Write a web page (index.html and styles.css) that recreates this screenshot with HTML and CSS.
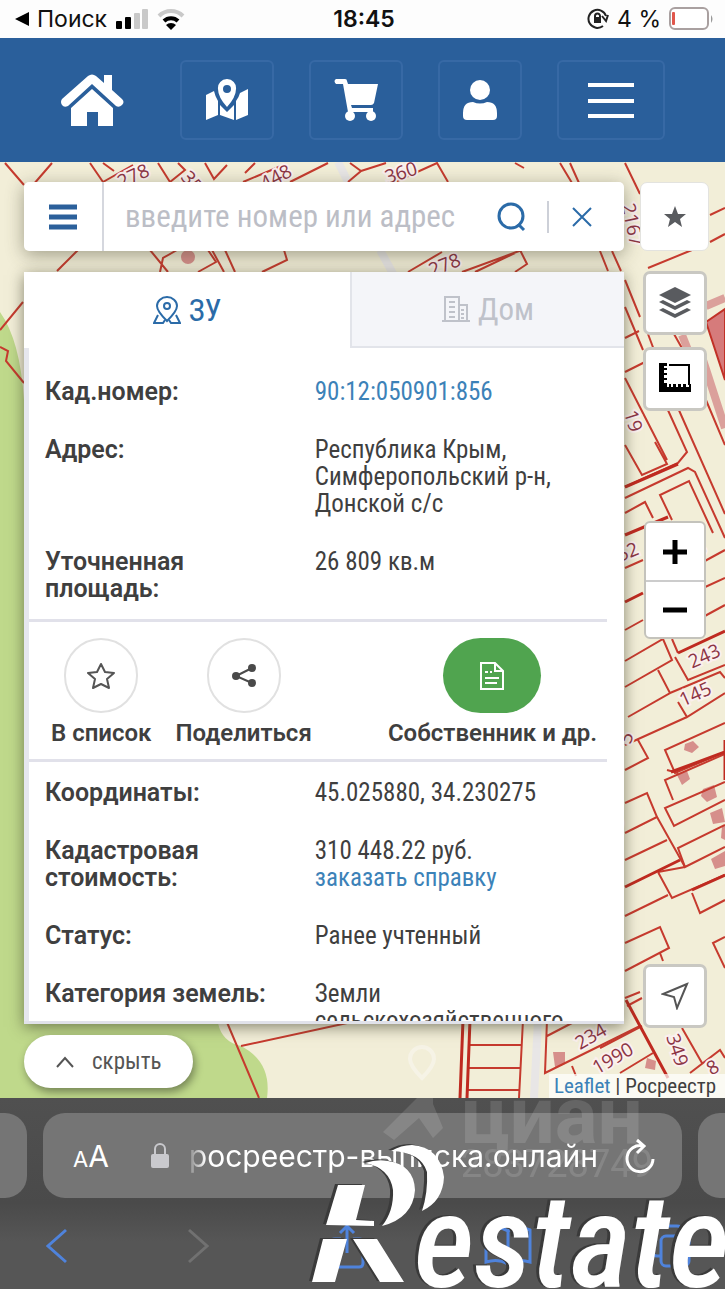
FILE: index.html
```html
<!DOCTYPE html>
<html lang="ru">
<head>
    <meta charset="UTF-8">
    <meta name="viewport" content="width=device-width, initial-scale=1.0">
    <title>Росреестр - выписка онлайн</title>
    <link rel="stylesheet" href="styles.css">
</head>
<body>
    <div class="status-bar">
        <div class="status-left">
            <svg width="14" height="14" viewBox="0 0 14 14"><path d="M0 7L14 0v14z"/></svg>
            <span>Поиск</span>
            <svg width="34" height="22" viewBox="0 0 34 22">
                <rect x="1" y="13" width="6" height="8" rx="1"/>
                <rect x="10" y="9" width="6" height="12" rx="1"/>
                <rect x="19" y="5" width="6" height="16" rx="1" fill="#c9c9c9"/>
                <rect x="27" y="1" width="6" height="20" rx="1" fill="#c9c9c9"/>
            </svg>
            <svg class="wifi" width="28" height="22" viewBox="0 0 28 22" fill="none" stroke-width="4">
                <path d="M2 8a17 17 0 0 1 24 0" stroke="#c9c9c9"/>
                <path d="M7 13a10 10 0 0 1 14 0" stroke="#000"/>
                <path d="M9 17a7 7 0 0 1 10 0l-5 5z" fill="#000"/>
            </svg>
        </div>
        <div class="status-time">18:45</div>
        <div class="status-right">
            <svg width="22" height="22" viewBox="0 0 22 22" fill="none" stroke="#222" stroke-width="2">
                <path d="M16 18a9 9 0 1 1 3-10M21 7l-2 6-4-5"/>
                <path d="M8 10V8a2.500 2.500 0 0 1 5 0v2"/>
                <rect x="7" y="9" width="7" height="6" fill="#222" stroke="none"/>
            </svg>
            <span>4 %</span>
            <svg width="44" height="24" viewBox="0 0 44 24">
                <rect x="1" y="1" width="38" height="21" rx="5" fill="#fff" stroke="#a9a0a0" stroke-width="2"/>
                <rect x="3" y="5" width="3" height="13" rx="1" fill="#e0574c"/>
                <path d="M42 8q3 4 0 8z" fill="#999"/>
            </svg>
        </div>
    </div>

    <nav class="navbar">
        <a class="home" href="#" aria-label="Главная">
            <svg width="64" height="52" viewBox="0 0 64 52" fill="#fff">
                <path d="M28 2q4-3 8 0l8 7V1h8v15l10 9q3 3 0 6t-6 1L32 10 8 32q-4 2-6-1t0-6z"/>
                <path d="M32 15l21 19v18H38V38H27v14H11V34z"/>
            </svg>
        </a>
        <a class="nav-box" href="#" aria-label="Карта">
            <svg width="46" height="42" viewBox="0 0 46 42" fill="#fff">
                <path d="M2 16l8-4q1 5 4 10v14L2 41zM16 26l7 7 7-7v15l-14-5zM32 22q3-4 4-8l8-4v26l-12 5z"/>
                <path fill-rule="evenodd" d="M23 0a9 9 0 0 1 9 10q0 8-9 18-9-10-9-18a9 9 0 0 1 9-10zm0 6a4 4 0 1 0 0 8 4 4 0 0 0 0-8z"/>
            </svg>
        </a>
        <a class="nav-box" href="#" aria-label="Корзина">
            <svg width="46" height="42" viewBox="0 0 46 42" fill="#fff">
                <path d="M3 0h9q2 0 2 2l1 3h30l-4 19q-1 2-3 2H18l1 3h21v4H15L10 5H3q-3-3 0-5z"/>
                <circle cx="17" cy="37" r="5"/><circle cx="38" cy="37" r="5"/>
            </svg>
        </a>
        <a class="nav-box nav-user" href="#" aria-label="Кабинет">
            <svg width="36" height="40" viewBox="0 0 36 40" fill="#fff">
                <circle cx="18" cy="10" r="10"/>
                <path d="M11 22q7 3 14 0 10 0 10 11v3q0 4-4 4H5q-4 0-4-4v-3q0-11 10-11z"/>
            </svg>
        </a>
        <button class="nav-box nav-menu" type="button" aria-label="Меню">
            <svg width="48" height="38" viewBox="0 0 48 38" stroke="#fff" stroke-width="4"><path d="M1 4h46M1 20h46M1 35h46"/></svg>
        </button>
    </nav>

    <main class="map">
        <svg class="map-layer" viewBox="0 162 725 936" preserveAspectRatio="xMidYMid slice" fill="none">
            <rect y="162" width="725" height="936" fill="#f2eed8"/>
            <!-- forest -->
            <path d="M0 312Q20 340 24 400L218 1023Q222 1042 241 1046Q272 1062 267 1098H0z" fill="#bfd98b"/>
            <!-- roads -->
            <path d="M338 162l18 36M380 250l22 40M538 1020l-4 78" stroke="#e8e6e6" stroke-width="8"/>
            <path d="M706 306l19-8M703 360l22 68M682 335l8 20" stroke="#dba09b" stroke-width="8"/>
            <!-- buildings -->
            <path d="M706 322l19-13v71z" fill="#d67b7b" stroke="#c13127" stroke-width="2"/>
            <g fill="#d68f8b">
                <circle cx="188" cy="257" r="7"/>
                <path d="M685 744l8-3 6 6-7 6-8-3zM677 775l10-4 3 8-8 6zM703 789l11-4 3 12-10 5-6-6zM710 813l12-5 3 14-12 2zM711 859l14-8v15l-10 3zM722 826h3v14l-4-2zM553 1052h12v12l-10 3zM647 1058l9 3-1 9-10-2z"/>
            </g>
            <!-- parcels -->
            <g stroke="#c63a2e" stroke-width="2">
                <path d="M5 163l19 22M52 163l-19 22M90 163l13 19 30-17M103 163l11 8M158 163l12 19 15-12-7-7M205 163l9 16 13-14M243 182l38-16M255 163l-10 10M290 182l38-19M350 163l11 8-13 11M361 171l25-8M395 182l42-19 11 19M515 163l9 5M560 163l12 20M570 163l9 20M625 163l15 31"/>
                <path d="M78 250l-21 21M150 250l18 22M160 272l3-14 14-8M198 272l18-10-8-12M212 250l12 22M225 250l10 22M262 272l25-12-3-10M408 272l34-20M462 272l60-22M520 250l7 14-12 8M475 272l40-19"/>
                <path d="M23 302L0 330M0 347l8 4-2 10 18 22"/>
                <path d="M710 215l15-7M710 242l15-8M648 268l44-18M600 251l8 20M612 251l9 20M625 280l15 37M625 307l18 43M625 338l14-7M648 334l6 16M674 334l9 16M703 393l22 52"/>
                <path d="M625 372l20-10M625 378l42 82M625 445l17 30 25-11-12-22M667 408l20 44-9 11-53 24M678 408l47 106M625 498l63-30 7 4 30 66M672 520l-12-25 29-14 24 52M625 513l20-11 8 16M625 568l18-8M625 630l18-10M703 562l22-12M703 588l22-10M703 617l22-12"/>
                <path d="M625 661l38-22 9 21-47 27M672 639l6 14M675 657l13 23 37-15M658 670l12 23-42 24M670 693l50-21 5 6M678 702l9 15 38-24M625 745l62-28M638 740l10 18-23 12M725 723l-60 27 10 23 50-21"/>
                <path d="M667 770l11 3M725 754l-60 26 8 20M725 782l-60 26 9 18 51-26M625 803l22-10 10 24-32 16M625 860l42-20M625 916l43-21M725 825l-47 23 7 19 40-20M685 867l-27 5M658 872l14 26 53-23M692 893l8 20 25-13M625 943l35-16 9 21-44 23M660 953l3 8M725 937l-12 6 12 25M625 998l15-6M627 1006l15-8"/>
                <path d="M657 817l28 50M600 1048l42-22M620 1073l33-20M682 1028l20 35M690 1073l30-23 5 8"/>
                <path d="M226 1020l33 78M241 1046l120-26M523 1020l-4 78M469 1045h53M468 1068h52M467 1090h52M547 1020l-2 53 95-47M547 1036l25-13M572 1066l4 10"/>
            </g>
            <g stroke="#bf2a20" stroke-width="3">
                <path d="M625 487l53-23M625 535l43-18M625 602l18-9M678 653l47-22M671 772l54-20M625 887l55-27M692 890l33-15M626 1000l42 78M463 1020l-3 78M470 1020l-3 78M725 740v40"/>
            </g>
            <g class="parcel-labels">
                <text transform="translate(136 182) rotate(-25)">278</text>
                <text transform="translate(187 186) rotate(50)">35</text>
                <text transform="translate(279 183) rotate(-28)">448</text>
                <text transform="translate(403 179) rotate(-18)">360</text>
                <text transform="translate(447 271) rotate(-22)">278</text>
                <text transform="translate(626 226) rotate(78)">2167</text>
                <text transform="translate(627 423) rotate(72)">19</text>
                <text transform="translate(630 558) rotate(-22)">52</text>
                <text transform="translate(703 555) rotate(-22)">5</text>
                <text transform="translate(707 662) rotate(-24)">243</text>
                <text transform="translate(698 700) rotate(-24)">145</text>
                <text transform="translate(632 740) rotate(-70)">5</text>
                <text transform="translate(623 824) rotate(-70)">9</text>
                <text transform="translate(594 1042) rotate(-30)">234</text>
                <text transform="translate(616 1064) rotate(-30)">1990</text>
                <text transform="translate(671 1052) rotate(72)">349</text>
                <text transform="translate(716 1073) rotate(-30)">8</text>
            </g>
            <path d="M422 1078q-12-12-12-19a12 12 0 0 1 24 0q0 7-12 19z" stroke="#f6f3e6" stroke-width="4"/>
        </svg>

        <div class="panel">
            <form class="search">
                <button class="search-menu" type="button" aria-label="Список">
                    <svg width="28" height="26" viewBox="0 0 28 26" stroke="#2b609b" stroke-width="5"><path d="M0 3h28M0 13h28M0 23h28"/></svg>
                </button>
                <input class="search-input" type="text" placeholder="введите номер или адрес" aria-label="Номер или адрес">
                <button class="search-btn" type="submit" aria-label="Найти">
                    <svg width="30" height="30" viewBox="0 0 30 30" fill="none" stroke="#2b6ba8" stroke-width="3"><circle cx="14" cy="14" r="12"/><path d="M21 22l6 6"/></svg>
                </button>
                <button class="search-clear" type="button" aria-label="Очистить">
                    <svg width="20" height="20" viewBox="0 0 20 20" stroke="#2b6ba8" stroke-width="2"><path d="M1 1l18 18M19 1L1 19"/></svg>
                </button>
            </form>

            <section class="card">
                <div class="tabs">
                    <button class="tab active" type="button">
                        <svg width="28" height="28" viewBox="0 0 28 28" fill="none" stroke="#2b6ba8" stroke-width="2">
                            <path d="M14 25Q4 15 4 10a10 9 0 0 1 20 0q0 5-10 15z"/><circle cx="14" cy="10" r="3"/>
                            <path d="M5 19l-4 8h9l2-3M23 19l4 8h-9l-2-3"/>
                        </svg>
                        ЗУ
                    </button>
                    <button class="tab" type="button">
                        <svg width="28" height="28" viewBox="0 0 28 28" fill="none" stroke="#bfc2ca" stroke-width="2">
                            <path d="M3 26V2h14v24M17 10h8v16M0 26h28M7 7h6M7 12h6M7 17h6M7 22h6M19 15h3M19 19h3M19 23h3"/>
                        </svg>
                        Дом
                    </button>
                </div>
                <div class="details">
                    <dl class="rows">
                        <dt>Кад.номер:</dt>
                        <dd><a href="#">90:12:050901:856</a></dd>
                        <dt>Адрес:</dt>
                        <dd>Республика Крым,<br>Симферопольский р-н,<br>Донской с/с</dd>
                        <dt>Уточненная<br>площадь:</dt>
                        <dd>26 809 кв.м</dd>
                    </dl>
                    <div class="actions">
                        <button class="action" type="button">
                            <span class="circle">
                                <svg width="28" height="28" viewBox="0 0 28 28" fill="none" stroke="#555" stroke-width="2" stroke-linejoin="round"><path d="M14 2l4 8 9 1-7 6 2 9-8-4-8 4 2-9-7-6 9-1z"/></svg>
                            </span>
                            В список
                        </button>
                        <button class="action" type="button">
                            <span class="circle">
                                <svg width="26" height="26" viewBox="0 0 26 26" fill="#4a4a4a" stroke="#4a4a4a" stroke-width="2"><path d="M21 5L5 13l16 7" fill="none"/><circle cx="21" cy="5" r="3"/><circle cx="5" cy="13" r="3"/><circle cx="21" cy="20" r="3"/></svg>
                            </span>
                            Поделиться
                        </button>
                        <button class="action action-owner" type="button">
                            <span class="circle green">
                                <svg width="26" height="28" viewBox="0 0 26 28" fill="none" stroke="#fff" stroke-width="2"><path d="M2 1h14l8 8v18H2zM16 1v8h8M6 10h3M11 10h2M6 16h14M6 21h12"/></svg>
                            </span>
                            Собственник и др.
                        </button>
                    </div>
                    <dl class="rows">
                        <dt>Координаты:</dt>
                        <dd>45.025880, 34.230275</dd>
                        <dt>Кадастровая<br>стоимость:</dt>
                        <dd>310 448.22 руб.<br><a href="#">заказать справку</a></dd>
                        <dt>Статус:</dt>
                        <dd>Ранее учтенный</dd>
                        <dt>Категория земель:</dt>
                        <dd>Земли<br>сельскохозяйственного</dd>
                    </dl>
                </div>
            </section>

            <button class="hide-btn" type="button">
                <svg width="18" height="12" viewBox="0 0 18 12" fill="none" stroke="#555" stroke-width="2"><path d="M1 11l8-9 8 9"/></svg>
                скрыть
            </button>
        </div>

        <div class="tools">
            <button class="tool tool-star" type="button" aria-label="Избранное">
                <svg width="24" height="24" viewBox="0 0 24 24" fill="#595b5f"><path d="M12 1l3 8h8l-6 5 2 8-7-5-7 5 2-8-6-5h8z"/></svg>
            </button>
            <button class="tool" type="button" aria-label="Слои">
                <svg width="32" height="32" viewBox="0 0 32 32" fill="#595b5f"><path d="M16 0l16 8-16 8L0 8zM4 13l12 6 12-6 4 2-16 8-16-8zM4 21l12 6 12-6 4 2-16 8-16-8z"/></svg>
            </button>
            <button class="tool" type="button" aria-label="Измерить">
                <svg width="32" height="32" viewBox="0 0 32 32" fill="none" stroke="#000"><path d="M10 2h20v20" stroke-width="2"/><path d="M0 0h8v3H5v2h3v2H5v3h3v2H5v3h3v2H5v3h3v4h2v-3h2v3h2v-3h3v3h2v-3h3v3h2v-3h3v3h3v-3h2v8H0z" fill="#000" stroke="none"/></svg>
            </button>
            <div class="zoom">
                <button type="button" aria-label="Приблизить">
                    <svg width="24" height="24" viewBox="0 0 24 24" stroke="#000" stroke-width="5"><path d="M0 12h24M12 0v24"/></svg>
                </button>
                <button type="button" aria-label="Отдалить">
                    <svg width="24" height="24" viewBox="0 0 24 24" stroke="#000" stroke-width="5"><path d="M0 12h24"/></svg>
                </button>
            </div>
            <button class="tool tool-locate" type="button" aria-label="Моё местоположение">
                <svg width="28" height="28" viewBox="0 0 28 28" fill="none" stroke="#555" stroke-width="2"><path d="M26 2L2 12l11 3 3 11z"/></svg>
            </button>
        </div>

        <div class="attribution"><a href="#">Leaflet</a> | Росреестр</div>
    </main>

    <footer class="browser">
        <div class="address-row">
            <div class="tab-edge"></div>
            <div class="address">
                <button class="text-size" type="button"><small>A</small>A</button>
                <div class="url">
                    <svg width="18" height="26" viewBox="0 0 18 26"><path d="M4 12V6a5 5 0 0 1 10 0v6" fill="none" stroke="#c9c9cd" stroke-width="2"/><rect y="11" width="18" height="14" rx="2" fill="#c9c9cd"/></svg>
                    <span class="host">росреестр-выписка.онлайн</span>
                </div>
                <button class="reload" type="button" aria-label="Обновить">
                    <svg width="32" height="36" viewBox="0 0 32 36" fill="none" stroke="#fff" stroke-width="3"><path d="M19 8a13 13 0 1 0 10 13M13 2l7 6-7 7"/></svg>
                </button>
            </div>
            <div class="tab-edge"></div>
        </div>
        <div class="toolbar">
            <button type="button" aria-label="Назад"><svg width="22" height="36" viewBox="0 0 22 36"><path d="M20 2L2 18l18 16"/></svg></button>
            <button class="disabled" type="button" aria-label="Вперёд"><svg width="22" height="36" viewBox="0 0 22 36"><path d="M2 2l18 16L2 34"/></svg></button>
            <button type="button" aria-label="Поделиться"><svg width="36" height="46" viewBox="0 0 36 46"><path d="M12 16H6q-4 0-4 4v20q0 4 4 4h24q4 0 4-4V20q0-4-4-4h-6M18 30V3M11 10l7-7 7 7"/></svg></button>
            <button type="button" aria-label="Закладки"><svg width="48" height="42" viewBox="0 0 48 42"><path d="M24 6Q14 0 2 5v32q12-4 22 2 10-6 22-2V5Q34 0 24 6zv33"/></svg></button>
            <button type="button" aria-label="Вкладки"><svg width="40" height="44" viewBox="0 0 40 44"><rect x="10" y="12" width="28" height="30" rx="5"/><path d="M10 32H6q-4 0-4-4V6q0-4 4-4h20q4 0 4 4v6"/></svg></button>
        </div>
        <div class="cian">
            <svg width="60" height="42" viewBox="0 0 60 42"><path d="M0 34L34 0h16v6l10 24-10 10-14-20-25 22z" fill="#fff"/></svg>
            <div>циан<small>283728749</small></div>
        </div>
        <svg class="restate" width="415" height="150" viewBox="310 1139 415 150" fill="#fff">
            <path d="M338 1185h27l-9 35 18 1v5l-48-1zM323 1239h24l-12 43h-23zM353 1239h24l27 43h-24z"/>
            <path d="M365 1163q12-4 23-2 26 4 27 29-2 28-33 36 12-15 11-36-3-22-28-27z"/>
            <path d="M391 1151q10-6 21-6 28 2 32 32-1 24-22 34 6-18 5-39-6-20-36-21z"/>
            <text x="414" y="1287">estate</text>
        </svg>
    </footer>
</body>
</html>
```

FILE: styles.css
```css
* {
    box-sizing: border-box;
}
body {
    margin: 0;
    height: 100vh;
    display: flex;
    flex-direction: column;
    overflow: hidden;
    font-family: "Roboto Condensed", Roboto, sans-serif;
    font-size: 25px;
    color: #3f3f3f;
}
button {
    margin: 0;
    padding: 0;
    border: 0;
    background: none;
    font: inherit;
    color: inherit;
    cursor: pointer;
}
a {
    color: #3c82b8;
    text-decoration: none;
}
svg {
    display: block;
    flex: none;
}

/* Phone status bar */
.status-bar {
    height: 38px;
    flex: none;
    display: grid;
    grid-template-columns: 1fr auto 1fr;
    align-items: center;
    padding: 0 12px 0 15px;
    background: #fdfdfd;
    font-family: Inter, sans-serif;
    font-size: 23px;
    color: #111;
}
.status-left,
.status-right {
    display: flex;
    align-items: center;
    gap: 8px;
}
.status-right {
    justify-content: flex-end;
}
.status-time {
    font-weight: 600;
}

/* Site header */
.navbar {
    flex: none;
    display: flex;
    align-items: center;
    gap: 35px;
    padding: 22px 60px;
    background: #2a5f9b;
}
.home {
    margin-right: auto;
}
.nav-box {
    width: 94px;
    height: 80px;
    display: flex;
    align-items: center;
    justify-content: center;
    border: 2px solid #3769a5;
    border-radius: 6px;
}
.nav-user {
    width: 84px;
}
.nav-menu {
    width: 108px;
}

/* Map */
.map {
    position: relative;
    flex: 1;
    min-height: 0;
    display: flex;
    gap: 16px;
    padding: 20px 16px 8px 24px;
}
.map-layer {
    position: absolute;
    inset: 0;
    width: 100%;
    height: 100%;
}
.parcel-labels {
    font-family: "Open Sans", sans-serif;
    font-size: 19px;
    fill: #8c3444;
    stroke: #fbf0ee;
    stroke-width: 4px;
    paint-order: stroke;
    text-anchor: middle;
}
.panel {
    position: relative;
    flex: 1;
    min-width: 0;
    display: flex;
    flex-direction: column;
}
.search {
    flex: none;
    height: 69px;
    display: flex;
    align-items: center;
    margin-bottom: 21px;
    background: #fff;
    border-radius: 5px;
    box-shadow: 0 4px 18px rgba(60, 60, 40, 0.45);
}
.search-menu {
    width: 80px;
    height: 100%;
    display: flex;
    align-items: center;
    justify-content: center;
    border-right: 2px solid #d5d7de;
}
.search-input {
    flex: 1;
    min-width: 0;
    padding: 0 0 0 21px;
    border: 0;
    outline: 0;
    background: none;
    font: inherit;
    font-size: 31px;
}
.search-input::placeholder {
    color: #bcbec6;
}
.search-btn {
    padding: 0 20px 0 16px;
}
.search-clear {
    height: 32px;
    padding: 0 32px 0 23px;
    border-left: 2px solid #cdd0d8;
}

/* Object card */
.card {
    flex: 1;
    min-height: 0;
    display: flex;
    flex-direction: column;
    overflow: hidden;
    background: #fff;
    border-bottom: 3px solid #e1e2ea;
    box-shadow: 0 3px 14px rgba(60, 60, 40, 0.6);
}
.tabs {
    flex: none;
    display: flex;
    height: 76px;
}
.tab {
    flex: 5;
    display: flex;
    align-items: center;
    justify-content: center;
    gap: 8px;
    background: #f4f5f9;
    border: 2px solid #e2e4ea;
    border-width: 0 0 2px 2px;
    font-size: 31px;
    color: #bfc2ca;
}
.tab.active {
    flex: 6;
    background: #fff;
    border: 0;
    color: #2b6ba8;
}
.details {
    flex: 1;
    min-height: 0;
    overflow: hidden;
    padding-right: 17px;
    border-left: 5px solid #e6e7ee;
}
.rows {
    display: grid;
    grid-template-columns: 48% 1fr;
    row-gap: 31px;
    margin: 0;
    padding: 17px 0 17px 16px;
    line-height: 27px;
}
.rows:first-child {
    padding-top: 30px;
}
.rows dt,
.action {
    font-family: Roboto, sans-serif;
    font-weight: 600;
}
.rows dd {
    margin: 0;
}
.actions {
    display: flex;
    gap: 24px;
    padding: 16px 10px 12px 22px;
    border: 3px solid #e1e1ea;
    border-width: 3px 0;
}
.action {
    display: flex;
    flex-direction: column;
    align-items: center;
    gap: 7px;
    font-size: 24px;
    line-height: 27px;
    white-space: nowrap;
}
.action-owner {
    margin-left: auto;
}
.circle {
    width: 74px;
    height: 75px;
    display: flex;
    align-items: center;
    justify-content: center;
    border: 2px solid #e1e1e1;
    border-radius: 38px;
}
.circle.green {
    width: 98px;
    background: #50a44f;
    border: 0;
}
.hide-btn {
    flex: none;
    align-self: flex-start;
    display: flex;
    align-items: center;
    gap: 18px;
    height: 53px;
    margin: 11px 0 2px;
    padding: 0 32px;
    border-radius: 27px;
    background: #fff;
    box-shadow: 2px 4px 8px rgba(0, 0, 0, 0.4);
    font-size: 23px;
    color: #555;
}

/* Map controls */
.tools {
    position: relative;
    flex: none;
    width: 69px;
    display: flex;
    flex-direction: column;
    align-items: center;
}
.tool {
    width: 64px;
    height: 64px;
    margin-bottom: 12px;
    display: flex;
    align-items: center;
    justify-content: center;
    background: #fff;
    border: 3px solid #c9c8c2;
    border-radius: 7px;
}
.tool-star {
    width: 69px;
    height: 69px;
    margin-bottom: 20px;
    border: 1px solid #e3e3df;
}
.zoom {
    width: 62px;
    margin-top: 98px;
    background: #fff;
    border: 2px solid #c4c3bc;
    border-radius: 6px;
}
.zoom button {
    width: 100%;
    height: 57px;
    display: flex;
    align-items: center;
    justify-content: center;
}
.zoom button + button {
    border-top: 2px solid #ccc;
}
.tool-locate {
    margin-top: auto;
    margin-bottom: 62px;
}
.attribution {
    position: absolute;
    right: 0;
    bottom: 0;
    padding: 0 9px 0 5px;
    background: rgba(255, 255, 255, 0.7);
    font-size: 21px;
    line-height: 24px;
}

/* Browser chrome */
.browser {
    position: relative;
    flex: none;
    height: 191px;
    overflow: hidden;
    padding-top: 15px;
    background: linear-gradient(#505050, #4a4a4a 55%, #565656 75%);
    font-family: Inter, sans-serif;
    color: #fff;
}
.address-row {
    display: flex;
    gap: 16px;
    height: 85px;
}
.tab-edge {
    width: 27px;
    background: #757575;
    border-radius: 0 22px 22px 0;
}
.tab-edge:last-child {
    border-radius: 22px 0 0 22px;
}
.address {
    flex: 1;
    min-width: 0;
    display: flex;
    align-items: center;
    padding: 0 26px 0 30px;
    background: #757575;
    border-radius: 22px;
}
.text-size {
    font-size: 30px;
}
.text-size small {
    font-size: 22px;
}
.url {
    flex: 1;
    min-width: 0;
    display: flex;
    align-items: center;
    justify-content: flex-end;
    gap: 9px;
    padding-right: 26px;
    font-size: 30px;
    white-space: nowrap;
}
/* long hosts fade out on the left */
.host {
    width: 420px;
    display: flex;
    justify-content: flex-end;
    overflow: hidden;
    mask-image: linear-gradient(to right, transparent 8px, #000 28px);
}
.toolbar {
    display: flex;
    justify-content: space-between;
    align-items: center;
    height: 91px;
    padding: 4px 34px 0 46px;
}
.toolbar svg {
    fill: none;
    stroke: #4f83dc;
    stroke-width: 3px;
}
.toolbar .disabled svg {
    stroke: #717171;
}

/* Watermarks */
.cian {
    position: absolute;
    right: 72px;
    top: -12px;
    display: flex;
    gap: 18px;
    font-family: Roboto, sans-serif;
    font-weight: bold;
    font-size: 80px;
    line-height: 60px;
    opacity: 0.12;
    pointer-events: none;
}
.cian svg {
    margin-top: 12px;
}
.cian small {
    display: block;
    font-size: 38px;
    font-weight: 400;
    line-height: 36px;
}
.restate {
    position: absolute;
    right: 0;
    bottom: 0;
    pointer-events: none;
    font-family: "Roboto Condensed", "Liberation Sans", sans-serif;
    font-size: 131px;
    font-style: italic;
    font-weight: 500;
    filter: drop-shadow(-3px -1px 0 #3a3a3a);
}
```
